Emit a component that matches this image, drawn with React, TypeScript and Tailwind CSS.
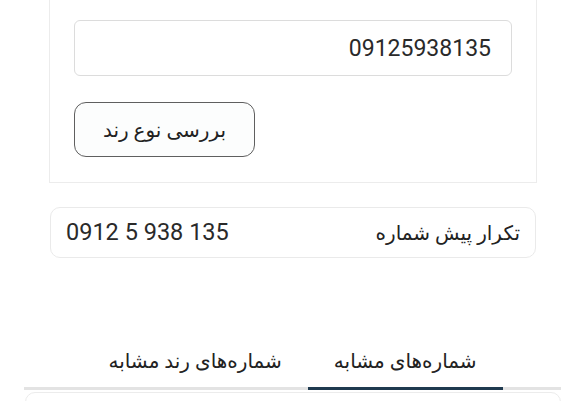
import { useState } from 'react';

const tabs = ['شماره‌های مشابه', 'شماره‌های رند مشابه'];

export default function App() {
  const [phone, setPhone] = useState('09125938135');
  const [activeTab, setActiveTab] = useState(0);

  return (
    <div
      dir="rtl"
      className="w-[577px] h-[401px] overflow-hidden bg-white text-[#222] font-['Roboto','DejaVu_Sans',sans-serif]"
    >
      {/* search card (top is scrolled out of view) */}
      <div className="-mt-5 mr-[40px] ml-[49px] border border-[#ececec] bg-white px-6 pt-[39px] pb-[25px]">
        <input
          type="text"
          value={phone}
          onChange={(e) => setPhone(e.target.value)}
          className="block w-full h-[56px] rounded-md border border-[#dcdcdc] bg-white pr-5 pl-4 text-right text-[23px] text-[#2a2a2a] outline-none"
        />
        <div className="mt-[26px] flex justify-end">
          <button
            type="button"
            className="w-[181px] h-[55px] rounded-[12px] border border-[#5f5f5f] bg-[#fcfdfd] text-[20px] text-[#222]"
          >
            بررسی نوع رند
          </button>
        </div>
      </div>

      {/* prefix repeat row */}
      <div className="mt-[24px] mr-[41px] ml-[50px] h-[51px] rounded-[10px] border border-[#eaeaea] flex items-center justify-between px-[15px]">
        <span className="text-[20px] text-[#222]">تکرار پیش شماره</span>
        <span dir="ltr" className="text-[23.5px] text-[#2a2a2a]">0912 5 938 135</span>
      </div>

      {/* tabs */}
      <div className="mt-[77px] ml-[24px] mr-[16px] border-b-[3px] border-[#e3e3e3] flex justify-center">
        {tabs.map((t, i) => (
          <button
            key={t}
            type="button"
            onClick={() => setActiveTab(i)}
            className={
              'h-[55px] px-[26px] -mb-[3px] border-b-[3px] text-[20px] text-[#222] ' +
              (activeTab === i ? 'border-[#1f3a4f]' : 'border-transparent')
            }
          >
            {t}
          </button>
        ))}
      </div>

      <div className="mt-[2px] ml-[25px] mr-[16px] h-[40px] rounded-[10px] border border-[#ececec]" />
    </div>
  );
}
